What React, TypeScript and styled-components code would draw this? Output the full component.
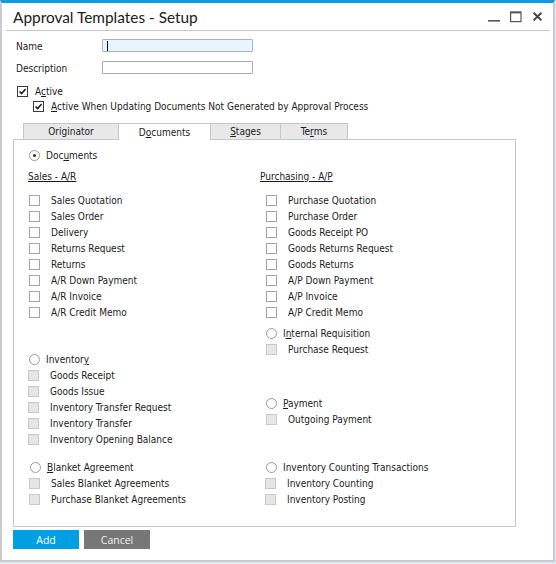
import React from "react";
import styled, { createGlobalStyle } from "styled-components";

const GlobalStyle = createGlobalStyle`
  html, body {
    margin: 0;
    padding: 0;
    background: #d7eef4;
  }
  body {
    font-family: "DejaVu Sans Condensed", "Liberation Sans", sans-serif;
    font-size: 10px;
    color: #1b1b1b;
  }
`;

const Window = styled.div`
  width: 555px;
  height: 562px;
  box-sizing: border-box;
  background: #fff;
  border: 2px solid #cbcbcb;
  border-top: 3px solid #0f9be3;
  display: flex;
  flex-direction: column;
`;

const TitleBar = styled.div`
  height: 27px;
  margin: 0 3px 0 4px;
  padding: 0 6px 0 7px;
  border-bottom: 1px solid #c8c8c8;
  display: flex;
  align-items: center;
  justify-content: space-between;
`;

const Title = styled.div`
  font-family: "Lato", "Open Sans", sans-serif;
  font-size: 15.4px;
  color: #202020;
`;

const WinControls = styled.div`
  display: flex;
  gap: 10px;
  align-items: center;
`;

const Fields = styled.div`
  padding: 8px 0 0 14px;
  display: flex;
  flex-direction: column;
  gap: 9px;
`;

const FieldRow = styled.div`
  display: flex;
  align-items: center;
  height: 13px;
`;

const FieldLabel = styled.div`
  width: 86px;
  padding-top: 1px;
`;

const TextBox = styled.div<{ $focus?: boolean }>`
  width: 151px;
  height: 13px;
  box-sizing: border-box;
  border: 1px solid ${({ $focus }) => ($focus ? "#a9b4be" : "#ababab")};
  border-radius: 1px;
  background: ${({ $focus }) => ($focus ? "#e9f5fd" : "#fff")};
  display: flex;
  align-items: center;
  padding-left: 4px;
`;

const Caret = styled.span`
  width: 1px;
  height: 10px;
  background: #111;
`;

const Options = styled.div`
  margin: 10px 0 0 14px;
  display: flex;
  flex-direction: column;
`;

const OptionRow = styled.div<{ $indent: number }>`
  height: 15px;
  display: flex;
  align-items: center;
  gap: 7px;
  margin-left: ${({ $indent }) => $indent}px;
`;

const Box = styled.span<{ $disabled?: boolean; $checked?: boolean }>`
  width: 11px;
  height: 11px;
  box-sizing: border-box;
  flex: none;
  border: 1px solid
    ${({ $disabled, $checked }) =>
      $checked ? "#3a3a3a" : $disabled ? "#c8c8c8" : "#a3a3a3"};
  background: ${({ $disabled }) => ($disabled ? "#e6e6e6" : "#fff")};
  display: flex;
  align-items: center;
  justify-content: center;
`;

const Section = styled.div`
  margin: 9px 0 0 11px;
  display: flex;
  flex-direction: column;
`;

const TabStrip = styled.div`
  display: flex;
  padding-left: 10px;
  height: 16px;
`;

const Tab = styled.div<{ $w: number; $active?: boolean }>`
  width: ${({ $w }) => $w}px;
  height: ${({ $active }) => ($active ? 17 : 16)}px;
  box-sizing: border-box;
  margin-left: -1px;
  border: 1px solid #c6c6c6;
  border-bottom: none;
  background: ${({ $active }) => ($active ? "#fff" : "#e8e8e8")};
  display: flex;
  align-items: center;
  justify-content: center;
  position: relative;
  z-index: ${({ $active }) => ($active ? 1 : 0)};
  &:first-child {
    margin-left: 0;
  }
`;

const Panel = styled.div`
  width: 503px;
  height: 388px;
  box-sizing: border-box;
  border: 1px solid #c6c6c6;
  padding: 7px 0 0 14px;
`;

const Columns = styled.div`
  display: grid;
  grid-template-columns: 232px 1fr;
  margin-top: 6px;
`;

const Column = styled.div`
  display: flex;
  flex-direction: column;
`;

const Header = styled.div`
  height: 16px;
  line-height: 16px;
  text-decoration: underline;
`;

const Group = styled.div<{ $top: number }>`
  display: flex;
  flex-direction: column;
  margin-top: ${({ $top }) => $top}px;
`;

const Row = styled.div<{ $indent: number; $gap: number }>`
  height: 16px;
  display: flex;
  align-items: center;
  gap: ${({ $gap }) => $gap}px;
  margin-left: ${({ $indent }) => $indent}px;
`;

const Radio = styled.span<{ $on?: boolean }>`
  width: 11px;
  height: 11px;
  box-sizing: border-box;
  flex: none;
  border-radius: 50%;
  border: 1px solid #9a9a9a;
  background: #fff;
  display: flex;
  align-items: center;
  justify-content: center;
  &::after {
    content: "";
    width: 3px;
    height: 3px;
    border-radius: 50%;
    background: ${({ $on }) => ($on ? "#2a2a2a" : "transparent")};
  }
`;

const Mn = styled.span`
  text-decoration: underline;
`;

const Buttons = styled.div`
  display: flex;
  gap: 5px;
  margin-top: 3px;
`;

const Button = styled.div<{ $primary?: boolean }>`
  width: 66px;
  height: 19px;
  display: flex;
  align-items: center;
  justify-content: center;
  color: ${({ $primary }) => ($primary ? "#fff" : "#ececec")};
  font-family: "Open Sans", "Liberation Sans", sans-serif;
  font-size: 10.5px;
  background: ${({ $primary }) => ($primary ? "#009ee2" : "#777777")};
`;

const Check = () => (
  <svg width="9" height="9" viewBox="0 0 9 9">
    <path d="M1.5 4.5 L3.6 6.6 L7.6 2" fill="none" stroke="#1c1c1c" strokeWidth="1.5" />
  </svg>
);

const CheckItem = ({
  indent,
  disabled,
  children,
}: {
  indent: number;
  disabled?: boolean;
  children: React.ReactNode;
}) => (
  <Row $indent={indent} $gap={11}>
    <Box $disabled={disabled} />
    <span>{children}</span>
  </Row>
);

const RadioItem = ({
  indent,
  on,
  children,
}: {
  indent: number;
  on?: boolean;
  children: React.ReactNode;
}) => (
  <Row $indent={indent} $gap={6}>
    <Radio $on={on} />
    <span>{children}</span>
  </Row>
);

const salesDocs = [
  "Sales Quotation",
  "Sales Order",
  "Delivery",
  "Returns Request",
  "Returns",
  "A/R Down Payment",
  "A/R Invoice",
  "A/R Credit Memo",
];

const purchaseDocs = [
  "Purchase Quotation",
  "Purchase Order",
  "Goods Receipt PO",
  "Goods Returns Request",
  "Goods Returns",
  "A/P Down Payment",
  "A/P Invoice",
  "A/P Credit Memo",
];

const inventoryDocs = [
  "Goods Receipt",
  "Goods Issue",
  "Inventory Transfer Request",
  "Inventory Transfer",
  "Inventory Opening Balance",
];

export default function App() {
  return (
    <>
      <GlobalStyle />
      <Window>
        <TitleBar>
          <Title>Approval Templates - Setup</Title>
          <WinControls>
            <svg width="12" height="12" viewBox="0 0 12 12">
              <rect x="0" y="9" width="12" height="1.6" fill="#555" />
            </svg>
            <svg width="12" height="12" viewBox="0 0 12 12">
              <rect x="0.6" y="1" width="10.4" height="9.6" fill="none" stroke="#555" strokeWidth="1.2" />
              <rect x="0.6" y="0.8" width="10.4" height="1.6" fill="#555" />
            </svg>
            <svg width="12" height="12" viewBox="0 0 12 12">
              <path d="M1.6 1.8 L9.4 9.4 M9.4 1.8 L1.6 9.4" stroke="#444" strokeWidth="2" />
            </svg>
          </WinControls>
        </TitleBar>

        <Fields>
          <FieldRow>
            <FieldLabel>Name</FieldLabel>
            <TextBox $focus>
              <Caret />
            </TextBox>
          </FieldRow>
          <FieldRow>
            <FieldLabel>Description</FieldLabel>
            <TextBox />
          </FieldRow>
        </Fields>

        <Options>
          <OptionRow $indent={1}>
            <Box $checked>
              <Check />
            </Box>
            <span>
              A<Mn>c</Mn>tive
            </span>
          </OptionRow>
          <OptionRow $indent={17}>
            <Box $checked>
              <Check />
            </Box>
            <span>
              <Mn>A</Mn>ctive When Updating Documents Not Generated by Approval Process
            </span>
          </OptionRow>
        </Options>

        <Section>
          <TabStrip>
            <Tab $w={96}>Originator</Tab>
            <Tab $w={93} $active>
              D<Mn>o</Mn>cuments
            </Tab>
            <Tab $w={71}>
              <Mn>S</Mn>tages
            </Tab>
            <Tab $w={68}>
              Te<Mn>r</Mn>ms
            </Tab>
          </TabStrip>
          <Panel>
            <RadioItem indent={1} on>
              Doc<Mn>u</Mn>ments
            </RadioItem>
            <Columns>
              <Column>
                <Header>Sales - A/R</Header>
                <Group $top={7}>
                  {salesDocs.map((d) => (
                    <CheckItem key={d} indent={1}>
                      {d}
                    </CheckItem>
                  ))}
                </Group>
                <Group $top={31}>
                  <RadioItem indent={1}>
                    Inventor<Mn>y</Mn>
                  </RadioItem>
                  {inventoryDocs.map((d) => (
                    <CheckItem key={d} indent={0} disabled>
                      {d}
                    </CheckItem>
                  ))}
                </Group>
                <Group $top={12}>
                  <RadioItem indent={2}>
                    <Mn>B</Mn>lanket Agreement
                  </RadioItem>
                  <CheckItem indent={1} disabled>
                    Sales Blanket Agreements
                  </CheckItem>
                  <CheckItem indent={1} disabled>
                    Purchase Blanket Agreements
                  </CheckItem>
                </Group>
              </Column>
              <Column>
                <Header>Purchasing - A/P</Header>
                <Group $top={7}>
                  {purchaseDocs.map((d) => (
                    <CheckItem key={d} indent={6}>
                      {d}
                    </CheckItem>
                  ))}
                </Group>
                <Group $top={5}>
                  <RadioItem indent={6}>
                    I<Mn>n</Mn>ternal Requisition
                  </RadioItem>
                  <CheckItem indent={6} disabled>
                    Purchase Request
                  </CheckItem>
                </Group>
                <Group $top={38}>
                  <RadioItem indent={6}>
                    <Mn>P</Mn>ayment
                  </RadioItem>
                  <CheckItem indent={6} disabled>
                    Outgoing Payment
                  </CheckItem>
                </Group>
                <Group $top={32}>
                  <RadioItem indent={6}>Inventory Counting Transactions</RadioItem>
                  <CheckItem indent={5} disabled>
                    Inventory Counting
                  </CheckItem>
                  <CheckItem indent={5} disabled>
                    Inventory Posting
                  </CheckItem>
                </Group>
              </Column>
            </Columns>
          </Panel>
          <Buttons>
            <Button $primary>Add</Button>
            <Button>Cancel</Button>
          </Buttons>
        </Section>
      </Window>
    </>
  );
}
